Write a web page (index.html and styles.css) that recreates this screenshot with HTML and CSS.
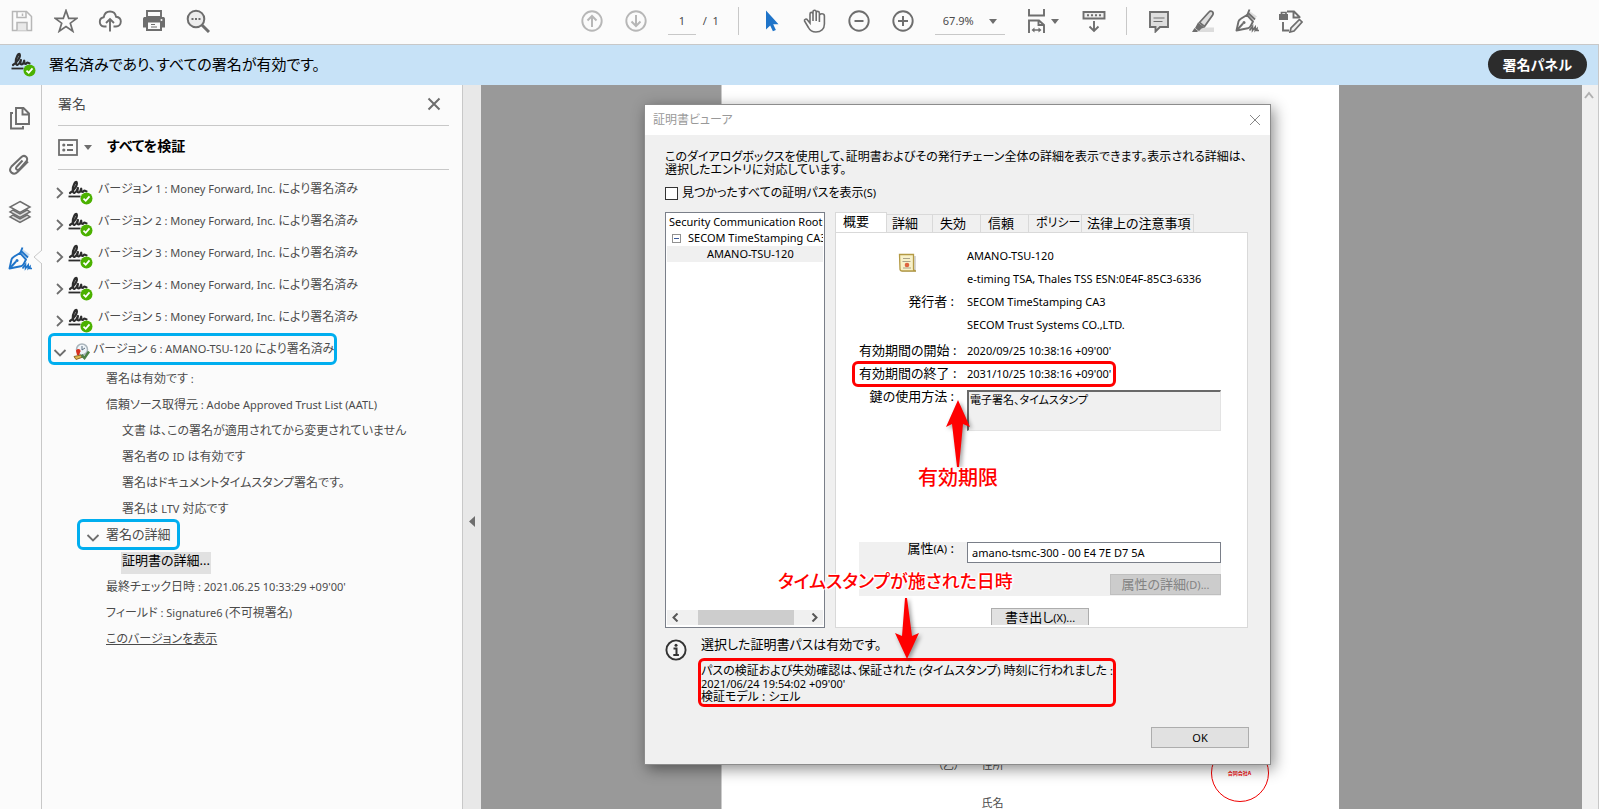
FILE: index.html
```html
<!DOCTYPE html>
<html lang="ja">
<head>
<meta charset="utf-8">
<title>証明書ビューア</title>
<link rel="stylesheet" href="styles.css">
</head>
<body>
<svg class="defs" aria-hidden="true">
  <symbol id="signed" viewBox="0 0 26 26">
    <path d="M2 13C6 10.500 9.800 5 8.700 2.300 7.300.5 4.800 6 4.800 9.500c0 3 .9 3.600 1.900 3.200 2-.6 2.500-3 3.200-4.600-.6 2-.8 4.400.7 4.400 1.700 0 2-2.400 2.600-3.800.1 1.700.3 3.300 1.400 3.300 1 0 1.100-1.500 1.900-1.500s.6.8 2 .8" fill="none" stroke="#2d2d2d" stroke-width="2.200" stroke-linecap="round" stroke-linejoin="round"/>
    <path d="M.5 16.500h12" stroke="#2d2d2d" stroke-width="1.800"/>
    <circle cx="18.500" cy="18.500" r="6" fill="#4bb100"/>
    <path d="M15.500 18.700l2.200 2.100 3.800-4.500" fill="none" stroke="#fff" stroke-width="1.800"/>
  </symbol>
  <symbol id="right" viewBox="0 0 8 14"><path d="M1 2l5.200 5L1 12" fill="none" stroke="#6e6e6e" stroke-width="1.800"/></symbol>
  <symbol id="down" viewBox="0 0 14 8"><path d="M1.500 1L7 6.500 12.500 1" fill="none" stroke="#6e6e6e" stroke-width="1.800"/></symbol>
  <symbol id="caret" viewBox="0 0 8 5"><path d="M0 0h8L4 5z" fill="#6e6e6e"/></symbol>
  <symbol id="pen" viewBox="0 0 24 24">
    <path d="M14.500 2l7.500 5.500-3.500 3.500-5.500-6z" fill="currentColor" opacity=".2"/>
    <path d="M1.500 21.500L3.500 12.500c.3-1.400 1-2 2.300-2.700L12 6l6 6.500-2.300 4.500c-.7 1.300-1.500 1.900-3 2.300z" fill="none" stroke="currentColor" stroke-width="1.900" stroke-linejoin="round"/>
    <path d="M12 6.500L14.500.500M12.500 3.500l7.500 7M2 21l6-6.500" fill="none" stroke="currentColor" stroke-width="1.900"/>
    <circle cx="9" cy="13.500" r="1.500" fill="currentColor"/>
    <path d="M14.500 21.500l3-4v4l2.700-3.500v3.500l1.800-2v2h2" fill="none" stroke="currentColor" stroke-width="1.600"/>
  </symbol>
</svg>

<header class="toolbar">
  <div class="tools">
    <button class="tool faded" aria-label="保存"><svg class="icon" viewBox="0 0 24 24"><path d="M2.500 2.500h14l5 5v14h-19z" fill="none" stroke="currentColor" stroke-width="1.500"/><path d="M7 2.500v6h9v-6M12.500 4.500v2.500" fill="none" stroke="currentColor" stroke-width="1.500"/><path d="M7 21.500v-8h10v8" fill="#e9e9e9" stroke="currentColor" stroke-width="1.500"/></svg></button>
    <button class="tool" aria-label="お気に入り"><svg class="icon" viewBox="0 0 24 24"><path d="M12 1.500l2.700 7.800h8l-6.400 4.900 2.500 8L12 17.500l-6.800 4.700 2.500-8L1.300 9.300h8z" fill="none" stroke="currentColor" stroke-width="1.700"/></svg></button>
    <button class="tool" aria-label="アップロード"><svg class="icon" viewBox="0 0 24 24"><path d="M8.500 17.500H6a4.700 4.700 0 0 1-.3-9.300C6.500 4 9 2.500 12 2.500s5.500 2 6 5.200c3 .3 4.800 2.300 4.800 4.900s-2 4.900-4.800 4.900h-2.500" fill="none" stroke="currentColor" stroke-width="1.900"/><path d="M12 22.500v-12M8 14l4-4 4 4" fill="none" stroke="currentColor" stroke-width="1.900"/></svg></button>
    <button class="tool" aria-label="印刷"><svg class="icon" viewBox="0 0 24 24"><path d="M1 10c0-1.500.8-2 2-2h18c1.200 0 2 .5 2 2v8.500h-3V22H4v-3.500H1z" fill="currentColor"/><path d="M5 8V2h14v6z" fill="#fbfbfb" stroke="currentColor" stroke-width="1.900"/><path d="M6 13.500h12v6.500H6z" fill="#fbfbfb"/><path d="M9 15.500h4M9 18h6" stroke="currentColor"/><circle cx="19.500" cy="11" r="1" fill="#fbfbfb"/></svg></button>
    <button class="tool" aria-label="検索"><svg class="icon" viewBox="0 0 24 24"><circle cx="10" cy="10" r="8.300" fill="#ededed" stroke="currentColor" stroke-width="2"/><path d="M15.700 15.700L23 23" stroke="currentColor" stroke-width="3"/><path d="M5.500 10h2M9 10h2M12.500 10h2" stroke="currentColor" stroke-width="2"/></svg></button>
  </div>
  <div class="spacer-left"></div>
  <div class="tools">
    <button class="tool faded" aria-label="前のページ"><svg class="icon" viewBox="0 0 24 24"><circle cx="12" cy="12" r="9.700" fill="none" stroke="currentColor" stroke-width="1.900"/><path d="M12 18V7M7.500 11.500L12 7l4.500 4.500" fill="none" stroke="currentColor" stroke-width="2"/></svg></button>
    <button class="tool faded" aria-label="次のページ"><svg class="icon" viewBox="0 0 24 24"><circle cx="12" cy="12" r="9.700" fill="none" stroke="currentColor" stroke-width="1.900"/><path d="M12 6v11M7.500 12.500L12 17l4.500-4.500" fill="none" stroke="currentColor" stroke-width="2"/></svg></button>
    <input class="page-box" value="1" aria-label="ページ番号">
    <span class="page-total">/&nbsp; 1</span>
    <span class="divider"></span>
    <button class="tool" aria-label="選択"><svg class="icon" viewBox="0 0 24 24"><path d="M7 1.500v19l4.200-4 2.700 5.800 3-1.400-2.700-5.600H19.500z" fill="#1f74c9"/></svg></button>
    <button class="tool" aria-label="手のひら"><svg class="icon" viewBox="0 0 24 24"><path d="M7 14V5c0-2.200 3-2.200 3 0V3c0-2.400 3.200-2.400 3.200 0v1c0-2.200 3.200-2.200 3.200.3V6.500c0-2.200 4.800-2.500 5 .4V15c0 5-3.500 8-8.500 8-4 0-6-1.500-7.500-4.500L1.500 12c-.5-2 2-2.600 3-1z M10 5v7M13.200 4v8M16.400 5v8" fill="none" stroke="currentColor" stroke-width="1.600"/></svg></button>
    <button class="tool" aria-label="縮小"><svg class="icon" viewBox="0 0 24 24"><circle cx="12" cy="12" r="9.700" fill="none" stroke="currentColor" stroke-width="1.900"/><path d="M7.500 12h9" stroke="currentColor" stroke-width="2"/></svg></button>
    <button class="tool" aria-label="拡大"><svg class="icon" viewBox="0 0 24 24"><circle cx="12" cy="12" r="9.700" fill="none" stroke="currentColor" stroke-width="1.900"/><path d="M7 12h10M12 7v10" stroke="currentColor" stroke-width="2"/></svg></button>
    <div class="zoom"><select aria-label="表示倍率"><option>67.9%</option></select><svg class="caret"><use href="#caret"/></svg></div>
    <button class="fit" aria-label="幅に合わせる"><svg class="icon" viewBox="0 0 24 24"><path d="M4 0v6.500h15V0" fill="none" stroke="currentColor" stroke-width="1.900"/><path d="M4 24V11.500h10l5 4.500v8M13.500 11.500V16H19" fill="none" stroke="currentColor" stroke-width="1.900"/><path d="M8 21h7" stroke="currentColor" stroke-width="1.500"/><path d="M9.500 18.500v5L6.500 21zM13.500 18.500v5l3-2.500z" fill="currentColor"/></svg><svg class="caret"><use href="#caret"/></svg></button>
    <button class="tool" aria-label="スクロール"><svg class="icon" viewBox="0 0 24 24"><path d="M1.500 3h21v6.500h-21z" fill="#ededed" stroke="currentColor" stroke-width="1.900"/><path d="M5 6.300h15" stroke="currentColor" stroke-width="2" stroke-dasharray="2 2"/><path d="M12 12v10M7.500 17.500L12 22l4.500-4.500" fill="none" stroke="currentColor" stroke-width="1.900"/></svg></button>
    <span class="divider"></span>
    <button class="tool" aria-label="コメント"><svg class="icon" viewBox="0 0 24 24"><path d="M3 3h18v15h-8l-4.500 4.500V18H3z" fill="#dedede" stroke="currentColor" stroke-width="1.900"/><path d="M6.500 9h11M6.500 12.500h9" stroke="currentColor" stroke-width="1.200"/></svg></button>
    <button class="tool" aria-label="ハイライト"><svg class="icon" viewBox="0 0 24 24"><path d="M7 18.500h16V23H5z" fill="#dcdcdc"/><path d="M8.500 13.500L18 3c1-1.200 2.300-1.200 3.300-.3s1 2.300.2 3.500L13.500 17.500z" fill="#dedede" stroke="currentColor" stroke-width="1.800"/><path d="M7 13.500l6.500 5-3 1-2.500 2.500-4-3z" fill="currentColor"/><path d="M3.500 19l3.500 3-1 1H1z" fill="currentColor"/></svg></button>
    <button class="tool" aria-label="署名"><svg class="icon"><use href="#pen"/></svg></button>
    <button class="tool" aria-label="編集"><svg class="icon" viewBox="0 0 24 24"><path d="M8 2.500h7l5.500 5.500v1M14.500 3v5.500h5.500M4 13v8.500h6" fill="none" stroke="currentColor" stroke-width="1.900"/><path d="M0 5h9v6H0z" fill="currentColor"/><path d="M2.500 6V3.500h4.500V6" fill="none" stroke="currentColor" stroke-width="1.700"/><path d="M20.500 10.500l2.500 2.500-8 9-4 1 1-4z" fill="#ededed" stroke="currentColor" stroke-width="1.700"/></svg></button>
  </div>
  <div class="spacer-right"></div>
</header>

<div class="notice">
  <svg class="signed"><use href="#signed"/></svg>
  <p class="notice-text">署名済みであり、すべての署名が有効です。</p>
  <button class="panel-button">署名パネル</button>
</div>

<main class="workspace">
  <nav class="rail">
    <button class="rail-item" aria-label="サムネール"><svg class="icon" viewBox="0 0 24 24"><path d="M8 2h7.500l5.500 5.500V18H8z M14.500 2.500V8.500H21" fill="none" stroke="currentColor" stroke-width="1.900"/><path d="M5 7H3v15.500h12V20" fill="none" stroke="currentColor" stroke-width="1.900"/></svg></button>
    <button class="rail-item" aria-label="添付"><svg class="icon" viewBox="0 0 24 24"><path d="M14.500 7.500l-6 6.500c-1.500 2 1 4 2.700 2.300l7-7.800c3-3.500-1.700-7.500-5-4.300L3.500 13.500c-4 5 2 9.500 6 5.500l10.500-10.500" fill="none" stroke="currentColor" stroke-width="2"/></svg></button>
    <button class="rail-item" aria-label="レイヤー"><svg class="icon" viewBox="0 0 24 24"><path d="M12 1.500l10 5.500-10 5.500L2 7z" fill="none" stroke="currentColor" stroke-width="1.500"/><path d="M5 10l-3 2 10 5.500L22 12l-3-2-7 4z" fill="#dedede" stroke="currentColor" stroke-width="1.500"/><path d="M5 15l-3 2 10 5.500L22 17l-3-2-7 4z" fill="#dedede" stroke="currentColor" stroke-width="1.500"/></svg></button>
    <button class="rail-item active" aria-label="署名"><svg class="icon"><use href="#pen"/></svg><svg class="notch" viewBox="0 0 9 14"><path d="M9 0L1 7l8 7" fill="#fbfbfb" stroke="#c8c8c8"/></svg></button>
  </nav>

  <aside class="panel">
    <div class="panel-head"><h2>署名</h2><button class="close" aria-label="閉じる"><svg viewBox="0 0 14 14"><path d="M1.500 1.500l11 11M12.500 1.500l-11 11" stroke="#6e6e6e" stroke-width="2"/></svg></button></div>
    <div class="panel-actions">
      <button class="options" aria-label="オプション"><svg class="list-icon" viewBox="0 0 20 17"><rect x="1" y="1" width="18" height="15" fill="none" stroke="#6e6e6e" stroke-width="1.800"/><circle cx="5.800" cy="6" r="1.600" fill="#6e6e6e"/><circle cx="5.800" cy="11" r="1.600" fill="#6e6e6e"/><path d="M9 6h6M9 11h6" stroke="#6e6e6e" stroke-width="1.800"/></svg><svg class="caret"><use href="#caret"/></svg></button>
      <button class="verify">すべてを検証</button>
    </div>
    <ul class="versions">
      <li class="version"><svg class="right"><use href="#right"/></svg><svg class="signed"><use href="#signed"/></svg><span class="label">バージョン <span class="en">1 : Money Forward, Inc. </span>により署名済み</span></li>
      <li class="version"><svg class="right"><use href="#right"/></svg><svg class="signed"><use href="#signed"/></svg><span class="label">バージョン <span class="en">2 : Money Forward, Inc. </span>により署名済み</span></li>
      <li class="version"><svg class="right"><use href="#right"/></svg><svg class="signed"><use href="#signed"/></svg><span class="label">バージョン <span class="en">3 : Money Forward, Inc. </span>により署名済み</span></li>
      <li class="version"><svg class="right"><use href="#right"/></svg><svg class="signed"><use href="#signed"/></svg><span class="label">バージョン <span class="en">4 : Money Forward, Inc. </span>により署名済み</span></li>
      <li class="version"><svg class="right"><use href="#right"/></svg><svg class="signed"><use href="#signed"/></svg><span class="label">バージョン <span class="en">5 : Money Forward, Inc. </span>により署名済み</span></li>
    </ul>
    <div class="version-open"><svg class="down"><use href="#down"/></svg><svg class="stamp" viewBox="0 0 18 18"><circle cx="9" cy="6.500" r="5.500" fill="#eef4f8" stroke="#a9b4bb" stroke-width="1.500"/><path d="M9 3v4l3-2" fill="none" stroke="#5c6f80"/><path d="M3 7.500c1-2.500 5-2 4.500.8L6 12H4z" fill="#d93120"/><path d="M1 13.500l7-1.500 2 2-7 2.500z" fill="#e1b84f" stroke="#8b6a28"/><path d="M8.500 12l3 3L16 8.500" fill="none" stroke="#4f8148" stroke-width="2.500"/></svg><span class="label">バージョン <span class="en">6 : AMANO-TSU-120 </span>により署名済み</span></div>
    <ul class="details">
      <li>署名は有効です<span class="en"> :</span></li>
      <li>信頼ソース取得元<span class="en"> : Adobe Approved Trust List (AATL)</span></li>
      <li class="deep">文書 は、この署名が適用されてから変更されていません</li>
      <li class="deep">署名者の <span class="en">ID</span> は有効です</li>
      <li class="deep">署名はドキュメントタイムスタンプ署名です。</li>
      <li class="deep">署名は <span class="en">LTV</span> 対応です</li>
      <li class="boxed"><span class="detail-toggle"><svg class="down"><use href="#down"/></svg>署名の詳細</span></li>
      <li class="action"><button class="cert-button">証明書の詳細...</button></li>
      <li>最終チェック日時<span class="en"> : 2021.06.25 10:33:29 +09'00'</span></li>
      <li>フィールド<span class="en"> : Signature6 (</span>不可視署名<span class="en">)</span></li>
      <li><a href="#version">このバージョンを表示</a></li>
    </ul>
  </aside>

  <div class="splitter"><svg viewBox="0 0 6 11"><path d="M6 0v11L0 5.500z" fill="#6e6e6e"/></svg></div>

  <section class="viewer">
    <article class="sheet">
      <div class="party"><span>（乙）</span><span>住所</span></div>
      <div class="party"><span></span><span>氏名</span></div>
      <div class="seal">合同会社A</div>
    </article>

    <div class="dialog" role="dialog" aria-label="証明書ビューア">
      <div class="title"><span>証明書ビューア</span><button class="close-thin" aria-label="閉じる"><svg viewBox="0 0 12 12"><path d="M1 1l10 10M11 1L1 11" stroke="#888"/></svg></button></div>
      <div class="dialog-body">
        <p class="intro">このダイアログボックスを使用して、証明書およびその発行チェーン全体の詳細を表示できます。表示される詳細は、<br>選択したエントリに対応しています。</p>
        <label class="check"><input type="checkbox">見つかったすべての証明パスを表示<span class="en">(S)</span></label>
        <div class="columns">
          <div class="tree">
            <div class="node">Security Communication RootCA2</div>
            <div class="node child"><svg viewBox="0 0 9 9"><rect x=".5" y=".5" width="8" height="8" fill="#fff" stroke="#919191"/><path d="M2 4.500h5" stroke="#3c5a9a"/></svg>SECOM TimeStamping CA3</div>
            <div class="node leaf">AMANO-TSU-120</div>
            <div class="hscroll"><svg viewBox="0 0 8 9"><path d="M6.500.500l-4 4 4 4" fill="none" stroke="#555" stroke-width="2"/></svg><span class="thumb"></span><svg viewBox="0 0 8 9"><path d="M1.500.500l4 4-4 4" fill="none" stroke="#555" stroke-width="2"/></svg></div>
          </div>
          <div class="tabbed">
            <div class="tabs" role="tablist">
              <button class="tab on" role="tab">概要</button><button class="tab first" role="tab">詳細</button><button class="tab" role="tab">失効</button><button class="tab" role="tab">信頼</button><button class="tab wide" role="tab">ポリシー</button><button class="tab last" role="tab">法律上の注意事項</button>
            </div>
            <div class="pane">
              <dl class="facts">
                <dt class="cert"><svg viewBox="0 0 20 20"><path d="M3 3h15v16H4z" fill="#999" opacity=".4"/><path d="M1.500 1.500h14V16c0 1 .5 2 2.500 2H4c-1.500 0-2-1-2-2z" fill="#f8f1c9" stroke="#b49a44" stroke-width="1.300"/><path d="M5 5.500h7M4.500 8.500h8M5 15h8" stroke="#aaa38a"/><circle cx="9" cy="12" r="2.300" fill="#dd6540"/></svg></dt><dd>AMANO-TSU-120</dd>
                <dt></dt><dd>e-timing TSA, Thales TSS ESN:0E4F-85C3-6336</dd>
                <dt>発行者 :</dt><dd>SECOM TimeStamping CA3</dd>
                <dt></dt><dd>SECOM Trust Systems CO.,LTD.</dd>
              </dl>
              <dl class="facts">
                <dt>有効期間の開始 :</dt><dd>2020/09/25 10:38:16 +09'00'</dd>
                <dt>有効期間の終了 :</dt><dd>2031/10/25 10:38:16 +09'00'</dd>
              </dl>
              <div class="usage"><label for="usage">鍵の使用方法 :</label><textarea id="usage" readonly>電子署名、タイムスタンプ</textarea></div>
              <div class="attribute">
                <label for="attribute">属性<span class="en">(A)</span> :</label><input id="attribute" value="amano-tsmc-300 - 00 E4 7E D7 5A">
                <button class="attribute-button" disabled>属性の詳細<span class="en">(D)...</span></button>
              </div>
              <button class="export">書き出し<span class="en">(X)...</span></button>
            </div>
          </div>
        </div>
        <div class="status">
          <svg viewBox="0 0 22 22"><circle cx="11" cy="11" r="9.600" fill="#f5f5f5" stroke="#333" stroke-width="1.900"/><circle cx="11" cy="6.200" r="1.500" fill="#333"/><path d="M8.500 9.500h3v6.500M8.300 16h5.600" fill="none" stroke="#333" stroke-width="2"/></svg>
          <div class="status-text">
            <p>選択した証明書パスは有効です。</p>
            <p class="result"><span class="sentence">パスの検証および失効確認は、保証された<span class="en"> (</span>タイムスタンプ<span class="en">) </span>時刻に行われました<span class="en"> :</span></span><br><span class="en">2021/06/24 19:54:02 +09'00'</span><br>検証モデル : シェル</p>
          </div>
        </div>
        <div class="footer"><button class="ok">OK</button></div>
      </div>
      <div class="mark mark-expiry"></div>
      <div class="mark mark-time"></div>
      <svg class="arrow arrow-up" viewBox="0 0 24 68"><path d="M12 0l12 27-7-3-4 43h-2L6 24l-6 3z" fill="red"/></svg>
      <svg class="arrow arrow-down" viewBox="0 0 24 61"><path d="M12 61L0 35l7 3L10 0h2l5 38 7-3z" fill="red"/></svg>
      <span class="note note-expiry">有効期限</span>
      <span class="note note-time">タイムスタンプが施された日時</span>
    </div>
  </section>
  <div class="vscroll"><svg viewBox="0 0 10 8"><path d="M1 7l4-5 4 5" fill="none" stroke="#b0b0b0" stroke-width="2"/></svg></div>
</main>
</body>
</html>
```
FILE: styles.css
```css
* { box-sizing: border-box; }
html, body { height: 100%; }
body {
  margin: 0;
  display: flex;
  flex-direction: column;
  overflow: hidden;
  background: #fbfbfb;
  color: #4b4b4b;
  font: 13px/16px "Noto Sans", "Noto Sans CJK JP", sans-serif;
  font-feature-settings: "palt";
}
button, input, select, textarea {
  font: inherit;
  font-feature-settings: inherit;
  color: inherit;
  border: 0;
  padding: 0;
  margin: 0;
  background: none;
  border-radius: 0;
}
p, h2, ul, dl, dd { margin: 0; padding: 0; }
ul { list-style: none; }
svg { display: block; flex: none; }
.defs { display: none; }
.en { font-size: 11px; white-space: pre-wrap; }
.icon { width: 24px; height: 24px; }
.caret { width: 8px; height: 5px; }
.signed { width: 26px; height: 26px; }

.toolbar {
  display: flex;
  flex: none;
  height: 45px;
  border-bottom: 1px solid #c8c8c8;
  color: #6e6e6e;
}
.tools { display: flex; align-items: center; height: 42px; }
.spacer-left { flex: 11; }
.spacer-right { flex: 9; }
.tool { width: 44px; height: 40px; display: flex; align-items: center; justify-content: center; }
.faded { color: #b7b7b7; }
.page-box {
  width: 28px;
  height: 28px;
  margin-left: 10px;
  border-bottom: 1px solid #c8c8c8;
  text-align: center;
  font-size: 11px;
  color: #4b4b4b;
}
.page-total { width: 42px; padding-left: 7px; font-size: 11px; color: #4b4b4b; white-space: nowrap; }
.divider { width: 1px; height: 28px; margin-right: 10px; background: #c8c8c8; }
.zoom {
  position: relative;
  width: 70px;
  height: 28px;
  margin: 0 20px 0 10px;
  border-bottom: 1px solid #c8c8c8;
}
.zoom select { appearance: none; width: 100%; height: 100%; padding-left: 8px; font-size: 11px; color: #4b4b4b; }
.zoom .caret { position: absolute; right: 8px; top: 12px; }
.fit { display: flex; align-items: center; gap: 2px; width: 34px; margin-right: 13px; }
.tools > .tool + .divider { margin-left: 10px; }

.notice {
  display: flex;
  flex: none;
  align-items: center;
  height: 40px;
  padding: 0 11px 1px 11px;
  border-right: 1px solid #c8c8c8;
  background: #c7e2f7;
  color: #000;
}
.notice-text { flex: 1; padding: 0 0 2px 12px; font-size: 15px; line-height: 20px; }
.panel-button {
  height: 29px;
  padding: 0 15px;
  border-radius: 15px;
  background: #2c2c2c;
  color: #fff;
  font-size: 14px;
  font-weight: bold;
}

.workspace { display: flex; flex: 1; min-height: 0; }
.rail { flex: none; width: 42px; padding-top: 9px; border-right: 1px solid #c8c8c8; color: #6e6e6e; }
.rail-item { position: relative; display: flex; align-items: center; justify-content: center; width: 39px; height: 47px; }
.rail-item.active { color: #1f74c9; }
.notch { position: absolute; left: 33px; top: 15px; width: 9px; height: 14px; }

.panel { flex: none; width: 421px; padding: 0 13px 0 6px; border-right: 1px solid #c8c8c8; }
.panel-head {
  display: flex;
  align-items: center;
  justify-content: space-between;
  height: 41px;
  margin-left: 10px;
  padding: 0 8px 2px 0;
  border-bottom: 1px solid #c8c8c8;
}
.panel-head h2 { font-size: 14px; font-weight: normal; }
.close svg { width: 14px; height: 14px; }
.panel-actions {
  display: flex;
  align-items: center;
  height: 44px;
  margin-left: 10px;
  border-bottom: 1px solid #c8c8c8;
}
.options { display: flex; align-items: center; gap: 6px; }
.list-icon { width: 20px; height: 17px; }
.verify { margin-left: 15px; padding-bottom: 3px; font-size: 14px; font-weight: bold; color: #000; }

.versions { padding-top: 2px; }
.version { display: flex; align-items: center; height: 32px; padding-left: 8px; font-size: 12px; }
.version .right { width: 8px; height: 14px; margin: 10px 4px 0 0; }
.version .signed { margin-top: 9px; }
.version .label { padding: 2px 0 0 4px; white-space: nowrap; }
.version-open {
  display: flex;
  align-items: center;
  width: max-content;
  height: 32px;
  margin-top: 1px;
  border: 3px solid #00aeef;
  border-radius: 6px;
  font-size: 12px;
}
.down { width: 14px; height: 8px; }
.version-open .down { margin: 8px 6px 0 2px; }
.stamp { width: 18px; height: 18px; margin: 6px 2px 0 0; }
.details { padding-left: 58px; font-size: 12px; }
.details li { display: flex; align-items: center; height: 26px; padding-top: 2px; white-space: pre; }
.details .deep { padding-left: 16px; }
.details .boxed { margin-left: -29px; font-size: 13px; }
.details .boxed, .details .action { padding-top: 0; }
.detail-toggle {
  display: flex;
  align-items: center;
  gap: 6px;
  height: 31px;
  padding: 0 6px;
  border: 3px solid #00aeef;
  border-radius: 6px;
}
.detail-toggle .down { margin-top: 8px; }
.cert-button { height: 22px; margin: 6px 0 0 15px; padding: 0 1px 6px 1px; background: #e1e1e1; color: #000; font-size: 13px; }
.details a { color: inherit; }

.splitter { display: flex; align-items: center; justify-content: flex-end; flex: none; width: 18px; padding: 148px 6px 0 0; background: #e8e8e8; }
.splitter svg { width: 6px; height: 11px; }

.viewer { position: relative; flex: 1; display: flex; justify-content: center; padding-right: 4px; overflow: hidden; background: #999; }
.sheet { position: relative; width: 618px; padding: 670px 0 0 216px; background: #fff; border-left: 1px solid #ccc; }
.party { display: grid; grid-template-columns: 44px 80px; height: 38px; font-size: 11px; line-height: 20px; }
.seal {
  position: absolute;
  left: 489px;
  top: 659px;
  width: 58px;
  height: 58px;
  border: 1px solid #f00000;
  border-radius: 50%;
  color: #f00000;
  font-size: 5px;
  font-weight: bold;
  line-height: 56px;
  text-align: center;
}
.vscroll { flex: none; width: 17px; padding: 6px 0 0 2px; border-right: 1px solid #c8c8c8; background: #f0f0f0; }
.vscroll svg { width: 10px; height: 8px; }

.dialog {
  position: absolute;
  left: 163px;
  top: 19px;
  width: 627px;
  border: 1px solid #8c8c8c;
  background: #f0f0f0;
  color: #000;
  box-shadow: 3px 4px 14px rgba(0, 0, 0, .45);
}
.title { display: flex; align-items: center; justify-content: space-between; height: 30px; padding: 0 9px 0 8px; background: #fff; color: #999; font-size: 12px; }
.close-thin svg { width: 12px; height: 12px; }
.dialog-body { padding: 15px 21px 16px 20px; }
.intro { font-size: 12px; line-height: 13px; white-space: nowrap; }
.check { display: flex; align-items: center; height: 16px; margin-top: 9px; font-size: 12px; }
.check input { appearance: none; width: 13px; height: 13px; margin-right: 4px; border: 1px solid #333; background: #fff; }
.columns { display: flex; gap: 10px; height: 416px; margin-top: 11px; padding-right: 1px; }
.tree {
  display: flex;
  flex-direction: column;
  width: 160px;
  padding: 1px;
  border: 1px solid #7a7f89;
  background: #fff;
  font-size: 11px;
  overflow: hidden;
}
.node { display: flex; align-items: center; flex: none; height: 16px; padding-left: 2px; white-space: nowrap; overflow: hidden; }
.child { gap: 7px; padding-left: 5px; }
.child svg { width: 9px; height: 9px; }
.leaf { padding-left: 40px; background: #f0f0f0; }
.hscroll { display: flex; align-items: center; height: 15px; margin: auto 0 1px; padding: 0 4px; background: #f0f0f0; }
.hscroll svg { width: 8px; height: 9px; }
.thumb { width: 96px; height: 15px; margin: 0 auto 0 19px; background: #cdcdcd; }

.tabbed { display: flex; flex-direction: column; flex: 1; min-width: 0; }
.tabs { display: flex; align-items: flex-end; height: 20px; }
.tab { width: 48px; height: 18px; border: 1px solid #d9d9d9; border-width: 1px 1px 0 0; text-align: left; padding: 0 0 1px 7px; line-height: 16px; white-space: nowrap; }
.tab.on { width: 52px; height: 21px; margin-bottom: -1px; border-left-width: 1px; background: #fff; padding: 0 0 4px 7px; }
.tab.first { width: 46px; padding-left: 5px; }
.tab.wide { width: 53px; font-size: 12px; }
.tab.last { width: 112px; padding-left: 5px; }
.pane { display: flex; flex-direction: column; flex: 1; padding: 11px 26px 2px 23px; border: 1px solid #d9d9d9; background: #fff; }
.facts { display: grid; grid-template-columns: 95px 1fr; column-gap: 13px; grid-auto-rows: 23px; line-height: 23px; margin-bottom: 3px; }
.facts + .facts { margin-bottom: 0; }
.facts dt { text-align: right; white-space: nowrap; }
.facts dd { font-size: 11px; white-space: nowrap; }
.facts .cert { padding: 9px 36px 0 0; }
.cert svg { width: 20px; height: 20px; margin-left: auto; }
.usage { display: grid; grid-template-columns: 95px 1fr; column-gap: 13px; line-height: 23px; }
.usage label { text-align: right; }
.usage textarea {
  height: 41px;
  margin-top: 5px;
  padding: 0 1px;
  border: 1px solid #e3e3e3;
  border-top: 2px solid #696969;
  border-left: 2px solid #696969;
  background: #f0f0f0;
  font-size: 11px;
  line-height: 16px;
  resize: none;
}
.attribute { display: grid; grid-template-columns: 95px 1fr; gap: 11px 13px; align-items: start; margin-top: auto; padding-bottom: 1px; background: #f0f0f0; }
.attribute label { text-align: right; line-height: 13px; }
.attribute input { height: 21px; padding: 0 4px 1px; border: 1px solid #7a7f89; background: #fff; font-size: 11px; }
.attribute-button { grid-column: 2; justify-self: end; width: 111px; height: 21px; border: 1px solid #bfbfbf; background: #ccc; color: #838383; line-height: 19px; }
.export { align-self: center; width: 98px; height: 17px; margin-top: 12px; border: 1px solid #adadad; border-bottom: 0; background: #e1e1e1; line-height: 16px; overflow: hidden; }

.status { display: flex; gap: 14px; margin-top: 8px; }
.status > svg { width: 22px; height: 22px; margin-top: 3px; }
.result { margin-top: 12px; font-size: 12px; line-height: 13px; white-space: nowrap; }
.sentence { position: relative; z-index: 1; }
.footer { display: flex; justify-content: flex-end; margin-top: 24px; }
.ok { width: 98px; height: 21px; border: 1px solid #adadad; background: #e1e1e1; font-size: 11px; }

.mark { position: absolute; border: 3px solid red; border-radius: 6px; }
.mark-expiry { left: 207px; top: 256px; width: 264px; height: 26px; }
.mark-time { left: 53px; top: 553px; width: 418px; height: 49px; }
.arrow { position: absolute; filter: drop-shadow(2px 2px 2px rgba(0, 0, 0, .4)); }
.arrow-up { left: 301px; top: 295px; width: 24px; height: 68px; }
.arrow-down { left: 250px; top: 493px; width: 24px; height: 61px; }
.note {
  position: absolute;
  color: red;
  font-size: 20px;
  font-weight: 500;
  line-height: 24px;
  white-space: nowrap;
  text-shadow: 1px 1px 1px #fff, -1px -1px 1px #fff, 1px -1px 1px #fff, -1px 1px 1px #fff, 2px 0 1px #fff, -2px 0 1px #fff;
}
.note-expiry { left: 273px; top: 361px; }
.note-time { left: 133px; top: 464px; font-size: 18px; }
```
